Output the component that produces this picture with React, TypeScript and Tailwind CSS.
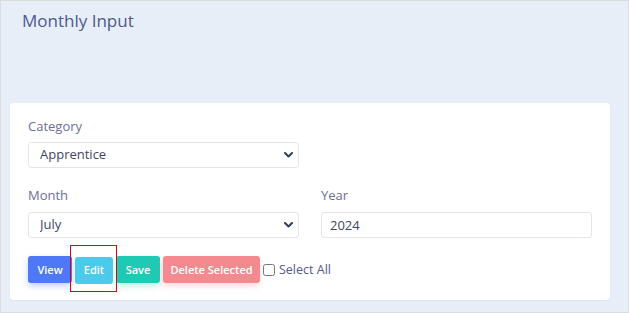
import { useState } from "react";

const font = { fontFamily: '"Open Sans", "Liberation Sans", sans-serif' };

function Chevron() {
  return (
    <svg
      className="pointer-events-none absolute right-[6px] top-1/2 -translate-y-1/2"
      width="9"
      height="6"
      viewBox="0 0 9 6"
      fill="none"
    >
      <path d="M1 1l3.5 3.5L8 1" stroke="#2f3f5c" strokeWidth="2" strokeLinecap="round" strokeLinejoin="round" />
    </svg>
  );
}

function Select({ value, options }: { value: string; options: string[] }) {
  return (
    <div className="relative w-[271px]">
      <select
        defaultValue={value}
        className="block h-[26px] w-full appearance-none rounded-[3px] border border-[#e4e5f1] bg-white pl-[11px] pr-6 text-[13px] text-[#3f4566] outline-none"
      >
        {options.map((o) => (
          <option key={o}>{o}</option>
        ))}
      </select>
      <Chevron />
    </div>
  );
}

export default function App() {
  const [all, setAll] = useState(false);

  return (
    <div
      className="h-[313px] w-[629px] overflow-hidden border border-[#dcdcdc] bg-[#e8eef7]"
      style={font}
    >
      <h1 className="pl-[21px] pt-[8px] text-[17px] font-medium leading-[24px] text-[#4b5a91]">
        Monthly Input
      </h1>

      <div className="ml-[9px] mt-[70px] h-[197px] w-[600px] rounded-[4px] bg-white px-[18px] pt-[13px] shadow-[0_1px_2px_rgba(60,70,120,0.06)]">
        <label className="mb-[6px] block text-[13px] leading-[20px] text-[#6b7096]">Category</label>
        <Select value="Apprentice" options={["Apprentice", "Staff", "Contract"]} />

        <div className="mt-[17px] flex gap-[22px]">
          <div>
            <label className="mb-[7px] block text-[13px] leading-[20px] text-[#6b7096]">Month</label>
            <Select
              value="July"
              options={["January", "February", "March", "April", "May", "June", "July", "August", "September", "October", "November", "December"]}
            />
          </div>
          <div>
            <label className="mb-[7px] block text-[13px] leading-[20px] text-[#6b7096]">Year</label>
            <input
              defaultValue="2024"
              className="block h-[26px] w-[271px] rounded-[3px] border border-[#e4e5f1] bg-white pl-[8px] text-[13px] text-[#3f4566] outline-none"
            />
          </div>
        </div>

        <div className="mt-[18px] flex items-center gap-[3px]">
          <button className="h-[27px] w-[44px] rounded-[3px] bg-[#4f78f6] text-[11px] font-semibold text-white shadow-[0_3px_6px_rgba(79,120,246,0.35)]">
            View
          </button>
          <div className="relative">
            <button className="h-[27px] w-[38px] rounded-[3px] bg-[#4ccaec] text-[11px] font-semibold text-white">
              Edit
            </button>
            <div className="pointer-events-none absolute -bottom-[8px] -left-[5px] -right-[4px] -top-[11px] border border-[#e30000]" />
          </div>
          <button className="h-[27px] w-[44px] rounded-[3px] bg-[#1fcab4] text-[11px] font-semibold text-white shadow-[0_3px_6px_rgba(31,202,180,0.3)]">
            Save
          </button>
          <button className="h-[27px] w-[97px] rounded-[3px] bg-[#f48a8f] text-[11px] font-semibold text-white shadow-[0_3px_6px_rgba(244,138,143,0.3)]">
            Delete Selected
          </button>
          <label className="flex items-center gap-[4px] text-[12.5px] text-[#525a8a]">
            <input
              type="checkbox"
              checked={all}
              onChange={(e) => setAll(e.target.checked)}
              className="m-0 h-[12px] w-[12px]"
            />
            Select All
          </label>
        </div>
      </div>
    </div>
  );
}
